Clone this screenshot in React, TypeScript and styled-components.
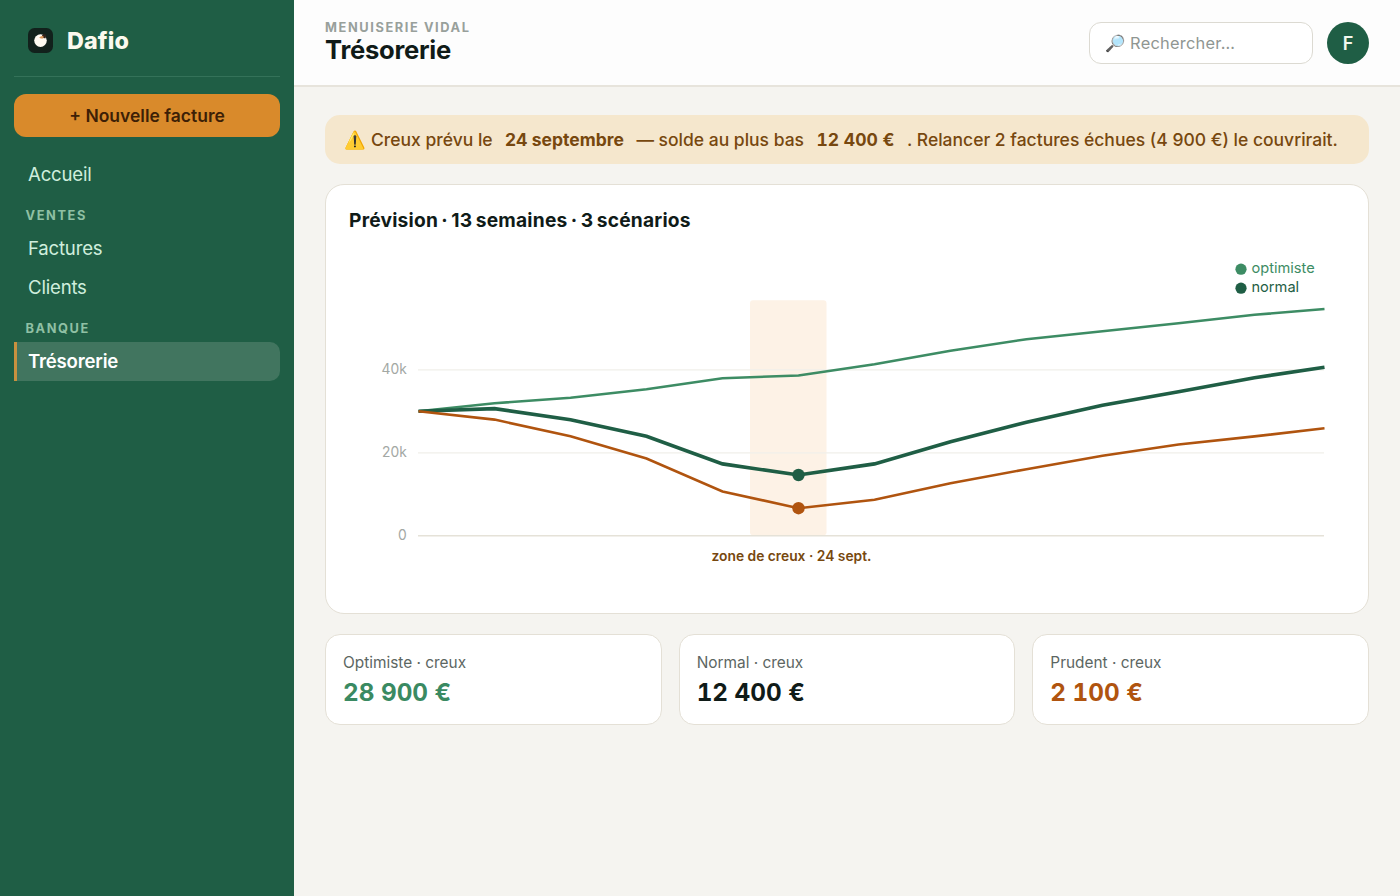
import React from "react";
import styled, { createGlobalStyle } from "styled-components";

const GlobalStyle = createGlobalStyle`
  *, *::before, *::after { box-sizing: border-box; }
  html, body { margin: 0; padding: 0; }
  body {
    font-family: Inter, "Liberation Sans", sans-serif;
    background: #f5f4f0;
    color: #101b18;
  }
`;

const Shell = styled.div`
  display: flex;
  height: 896px;
  overflow: hidden;
`;

const Sidebar = styled.aside`
  width: 294px;
  flex: none;
  padding: 0 14px;
  background: #1f5e45;
`;

const Brand = styled.div`
  display: flex;
  align-items: center;
  gap: 14px;
  height: 77px;
  padding: 5px 14px 0;
  border-bottom: 1px solid #347259;
`;

const BrandName = styled.span`
  font-size: 23.3px;
  font-weight: 800;
  letter-spacing: 0.15px;
  color: #fbf9ee;
`;

const NewInvoice = styled.button`
  display: block;
  width: 266px;
  height: 43px;
  margin: 17px 0;
  padding: 0;
  border: 0;
  border-radius: 12px;
  background: #d98a2b;
  color: #3d1f06;
  font: 600 17.5px Inter, sans-serif;
`;

const NavSection = styled.div`
  height: 35px;
  padding: 13.4px 0 0 11.5px;
  line-height: 17px;
  font-size: 12.8px;
  font-weight: 700;
  letter-spacing: 1.6px;
  color: #8fc0a4;
`;

const NavItem = styled.a<{ $active?: boolean }>`
  display: flex;
  align-items: center;
  height: 39.2px;
  padding-left: ${(p) => (p.$active ? "11px" : "14px")};
  border-left: ${(p) => (p.$active ? "3px solid #c8913f" : "0")};
  border-radius: ${(p) => (p.$active ? "0 10px 10px 0" : "0")};
  background: ${(p) => (p.$active ? "#41755f" : "transparent")};
  font-size: 18.6px;
  font-weight: ${(p) => (p.$active ? 600 : 400)};
  letter-spacing: -0.2px;
  color: ${(p) => (p.$active ? "#ffffff" : "#cfeedd")};
`;

const Main = styled.main`
  flex: 1;
  min-width: 0;
`;

const TopBar = styled.header`
  display: flex;
  align-items: center;
  height: 87px;
  padding: 1px 31px 0;
  border-bottom: 2px solid #e7e4dc;
  background: #fdfdfd;
`;

const Heading = styled.div`
  flex: 1;
  padding-bottom: 2px;
`;

const Company = styled.div`
  font-size: 12.8px;
  line-height: 16px;
  font-weight: 700;
  letter-spacing: 1.6px;
  color: #98a09b;
`;

const PageTitle = styled.h1`
  margin: -1px 0 0;
  font-size: 25.6px;
  line-height: 30px;
  font-weight: 700;
  letter-spacing: -0.25px;
`;

const Search = styled.div`
  display: flex;
  align-items: center;
  width: 224px;
  height: 42px;
  padding-left: 15px;
  border: 1px solid #dcdad2;
  border-radius: 12px;
  background: #fff;
  font-size: 16.4px;
  letter-spacing: 0.25px;
  color: #8f9692;
`;

const Avatar = styled.div`
  display: flex;
  align-items: center;
  justify-content: center;
  width: 42px;
  height: 42px;
  margin-left: 14px;
  border-radius: 50%;
  background: #1f5e45;
  color: #f3f8ef;
  font-size: 18px;
  font-weight: 600;
`;

const Content = styled.div`
  display: flex;
  flex-direction: column;
  padding: 27.5px 31px;
`;

const Alert = styled.div`
  display: flex;
  align-items: center;
  height: 49.5px;
  padding-left: 19.3px;
  border-radius: 15px;
  background: #f5e7cd;
  color: #77480f;
  font-size: 17.5px;
  font-weight: 500;
  white-space: nowrap;
`;

const AlertStrong = styled.b`
  margin: 0 12.5px;
  font-weight: 700;
`;

const AlertAmount = styled(AlertStrong)`
  font-variant-numeric: tabular-nums;
`;

const ChartCard = styled.section`
  height: 430.5px;
  margin-top: 19.5px;
  border: 1px solid #e4e0d6;
  border-radius: 19px;
  background: #fff;
`;

const ChartTitle = styled.h2`
  margin: 0;
  padding: 22px 23px 0;
  font-size: 19.2px;
  line-height: 26px;
  font-weight: 700;
  letter-spacing: 0.2px;
  word-spacing: -1.4px;
`;

const Plot = styled.svg`
  display: block;
  font-family: Inter, "Liberation Sans", sans-serif;
`;

const Stats = styled.div`
  display: grid;
  grid-template-columns: repeat(3, 1fr);
  gap: 17px;
  margin-top: 20px;
`;

const StatCard = styled.div`
  height: 91px;
  padding: 17px 17px 0;
  border: 1px solid #e4e0d6;
  border-radius: 15px;
  background: #fff;
`;

const StatLabel = styled.div`
  font-size: 15.4px;
  line-height: 21px;
  color: #5c6662;
`;

const StatValue = styled.div<{ $color: string }>`
  margin-top: 3px;
  font-size: 24.3px;
  line-height: 32px;
  font-weight: 750;
  font-variant-numeric: tabular-nums;
  letter-spacing: 0;
  color: ${(p) => p.$color};
`;

const xs = [418.5, 494.5, 570.5, 646.5, 722.5, 798.5, 874.5, 950.5, 1026.5, 1102.5, 1178.5, 1254.5, 1324.5];
const series = [
  { color: "#3d8c64", width: 2.6, ys: [411, 403, 397.5, 389, 378, 375.3, 364, 350.5, 339, 331, 323, 314.6, 308.8] },
  { color: "#1f5e45", width: 3.6, ys: [411, 408.4, 419.5, 436, 463.7, 474.8, 463.7, 441.5, 422, 405, 391.5, 377.5, 367] },
  { color: "#b0540f", width: 2.6, ys: [411, 419.4, 436, 458.3, 491.3, 508, 499.6, 483, 469, 455.5, 444.3, 436.2, 428] },
];
const toPoints = (ys: number[]) => ys.map((y, i) => `${xs[i]},${y}`).join(" ");

const ticks = [
  { y: 369.7, label: "40k", color: "#f0efea" },
  { y: 452.7, label: "20k", color: "#f0efea" },
  { y: 535.5, label: "0", color: "#e5e2d8" },
];

const stats = [
  { label: "Optimiste · creux", value: "28 900 €", color: "#3a8a62" },
  { label: "Normal · creux", value: "12 400 €", color: "#101b18" },
  { label: "Prudent · creux", value: "2 100 €", color: "#b0540f" },
];

function Logo() {
  return (
    <svg width="25" height="25" viewBox="0 0 25 25">
      <rect width="25" height="25" rx="6.5" fill="#12211c" />
      <circle cx="12.5" cy="12.6" r="6.3" fill="#fffaf2" />
      <path d="M14 7.2 Q16 5.6 17.8 6.8 Q18.4 9 17.2 10.6 L14.6 9.6Z" fill="#33221a" />
      <path d="M11.2 9.8 Q12.6 7.4 15.4 8 L15.4 10.6 L13 10.6Z" fill="#dc9557" />
    </svg>
  );
}

export default function App() {
  return (
    <>
      <GlobalStyle />
      <Shell>
        <Sidebar>
          <Brand>
            <Logo />
            <BrandName>Dafio</BrandName>
          </Brand>
          <NewInvoice>+ Nouvelle facture</NewInvoice>
          <NavItem>Accueil</NavItem>
          <NavSection>VENTES</NavSection>
          <NavItem>Factures</NavItem>
          <NavItem>Clients</NavItem>
          <NavSection>BANQUE</NavSection>
          <NavItem $active>Trésorerie</NavItem>
        </Sidebar>
        <Main>
          <TopBar>
            <Heading>
              <Company>MENUISERIE VIDAL</Company>
              <PageTitle>Trésorerie</PageTitle>
            </Heading>
            <Search>🔎 Rechercher…</Search>
            <Avatar>F</Avatar>
          </TopBar>
          <Content>
            <Alert>
              <span>⚠️ Creux prévu le</span>
              <AlertStrong>24 septembre</AlertStrong>
              <span>— solde au plus bas</span>
              <AlertAmount>12 400 €</AlertAmount>
              <span>. Relancer 2 factures échues (4 900 €) le couvrirait.</span>
            </Alert>
            <ChartCard>
              <ChartTitle>Prévision · 13 semaines · 3 scénarios</ChartTitle>
              <Plot width="1042" height="360" viewBox="326 232.8 1042 360">
                <rect x="750" y="300" width="76.5" height="235" rx="3" fill="#fdf2e6" />
                {ticks.map((t) => (
                  <g key={t.label}>
                    <line x1="418" x2="1324" y1={t.y} y2={t.y} stroke={t.color} strokeWidth="1.4" />
                    <text x="406.8" y={t.y + 4.3} textAnchor="end" fontSize="13.8" fill="#a3a8a4">
                      {t.label}
                    </text>
                  </g>
                ))}
                {series.map((s) => (
                  <polyline key={s.color} points={toPoints(s.ys)} fill="none" stroke={s.color} strokeWidth={s.width} />
                ))}
                <circle cx="798.5" cy="474.8" r="6.2" fill="#1f5e45" />
                <circle cx="798.5" cy="508" r="6.2" fill="#b0540f" />
                <text x="791.5" y="560.5" textAnchor="middle" fontSize="13.8" fontWeight="600" fill="#77480f">
                  zone de creux · 24 sept.
                </text>
                <circle cx="1241" cy="269" r="5.6" fill="#3d8c64" />
                <text x="1251.5" y="273" fontSize="14.6" fill="#3d8c64">optimiste</text>
                <circle cx="1241" cy="288" r="5.6" fill="#1f5e45" />
                <text x="1251.5" y="292" fontSize="14.6" fill="#1f5e45">normal</text>
              </Plot>
            </ChartCard>
            <Stats>
              {stats.map((s) => (
                <StatCard key={s.label}>
                  <StatLabel>{s.label}</StatLabel>
                  <StatValue $color={s.color}>{s.value}</StatValue>
                </StatCard>
              ))}
            </Stats>
          </Content>
        </Main>
      </Shell>
    </>
  );
}
